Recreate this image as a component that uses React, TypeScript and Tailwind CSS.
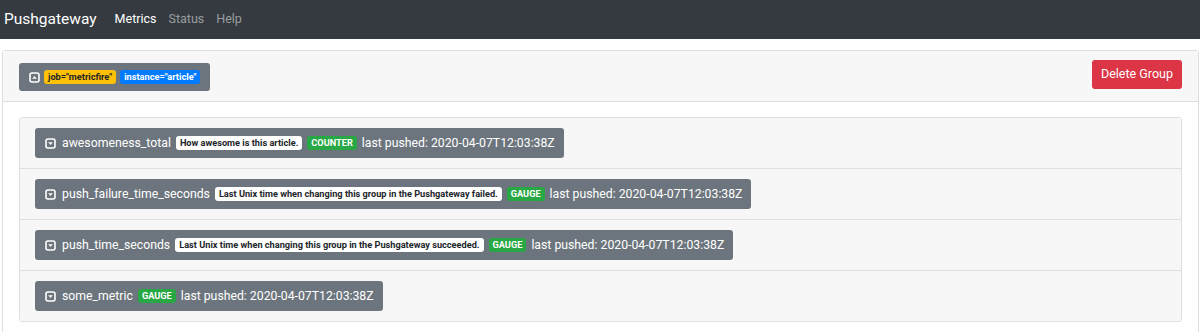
import { useState } from "react";

type Metric = {
  name: string;
  help?: string;
  type: "COUNTER" | "GAUGE";
  pushed: string;
};

const metrics: Metric[] = [
  { name: "awesomeness_total", help: "How awesome is this article.", type: "COUNTER", pushed: "2020-04-07T12:03:38Z" },
  {
    name: "push_failure_time_seconds",
    help: "Last Unix time when changing this group in the Pushgateway failed.",
    type: "GAUGE",
    pushed: "2020-04-07T12:03:38Z",
  },
  {
    name: "push_time_seconds",
    help: "Last Unix time when changing this group in the Pushgateway succeeded.",
    type: "GAUGE",
    pushed: "2020-04-07T12:03:38Z",
  },
  { name: "some_metric", type: "GAUGE", pushed: "2020-04-07T12:03:38Z" },
];

const CaretSquare = ({ up = false }: { up?: boolean }) => (
  <svg width="11" height="11" viewBox="0 0 11 11" className="shrink-0">
    <rect x="1" y="1" width="9" height="9" rx="2" fill="none" stroke="white" strokeWidth="1.6" />
    {up ? <polygon points="3.2,6.8 7.8,6.8 5.5,4" fill="white" /> : <polygon points="3.2,4.3 7.8,4.3 5.5,7" fill="white" />}
  </svg>
);

const Badge = ({ className, children }: { className: string; children: React.ReactNode }) => (
  <span className={`inline-block rounded-[3px] px-[4px] py-[2px] text-[9.2px] font-bold leading-none ${className}`}>
    {children}
  </span>
);

const MetricRow = ({ m, last }: { m: Metric; last: boolean }) => (
  <div className={`bg-[#f7f7f7] px-[15px] py-[10px] ${last ? "" : "border-b border-[#dfdfdf]"}`}>
    <button className="inline-flex h-[30px] items-center gap-[5px] rounded-[3px] bg-[#6c757d] pl-[10px] pr-[9px] text-[12.25px] text-white">
      <CaretSquare />
      <span className="ml-[1px]">{m.name}</span>
      {m.help && <Badge className="bg-white text-[#212529]">{m.help}</Badge>}
      <Badge className="bg-[#28a745] text-white">{m.type}</Badge>
      <span>last pushed: {m.pushed}</span>
    </button>
  </div>
);

export default function App() {
  const [active] = useState("Metrics");

  return (
    <div className="min-h-[332px] bg-white font-['Roboto','Liberation_Sans',sans-serif] text-[#212529]">
      <nav className="flex h-[39px] items-center bg-[#343a40] pl-[4px]">
        <span className="mr-[12px] text-[15.5px] text-white">Pushgateway</span>
        {["Metrics", "Status", "Help"].map((item) => (
          <a
            key={item}
            className={`px-[6px] text-[12.5px] ${item === active ? "text-white" : "text-white/50"}`}
          >
            {item}
          </a>
        ))}
      </nav>

      <div className="pl-[2px] pr-[1px] pt-[11px]">
        <div className="rounded-[3px] border border-[#dfdfdf]">
          <div className="flex h-[51px] items-start justify-between border-b border-[#dfdfdf] bg-[#f7f7f7] px-4">
            <button className="mt-[12px] inline-flex h-[28px] items-center gap-[4px] rounded-[3px] bg-[#6c757d] px-[10px]">
              <CaretSquare up />
              <Badge className="bg-[#ffc107] text-[#212529]">job="metricfire"</Badge>
              <Badge className="bg-[#007bff] text-white">instance="article"</Badge>
            </button>
            <button className="mt-[9px] h-[29px] rounded-[3px] bg-[#dc3545] px-[9px] text-[12.5px] text-white">
              Delete Group
            </button>
          </div>
          <div className="px-4 pt-[15px] pb-4">
            <div className="overflow-hidden rounded-[3px] border border-[#dfdfdf]">
              {metrics.map((m, i) => (
                <MetricRow key={m.name} m={m} last={i === metrics.length - 1} />
              ))}
            </div>
          </div>
        </div>
      </div>
    </div>
  );
}
